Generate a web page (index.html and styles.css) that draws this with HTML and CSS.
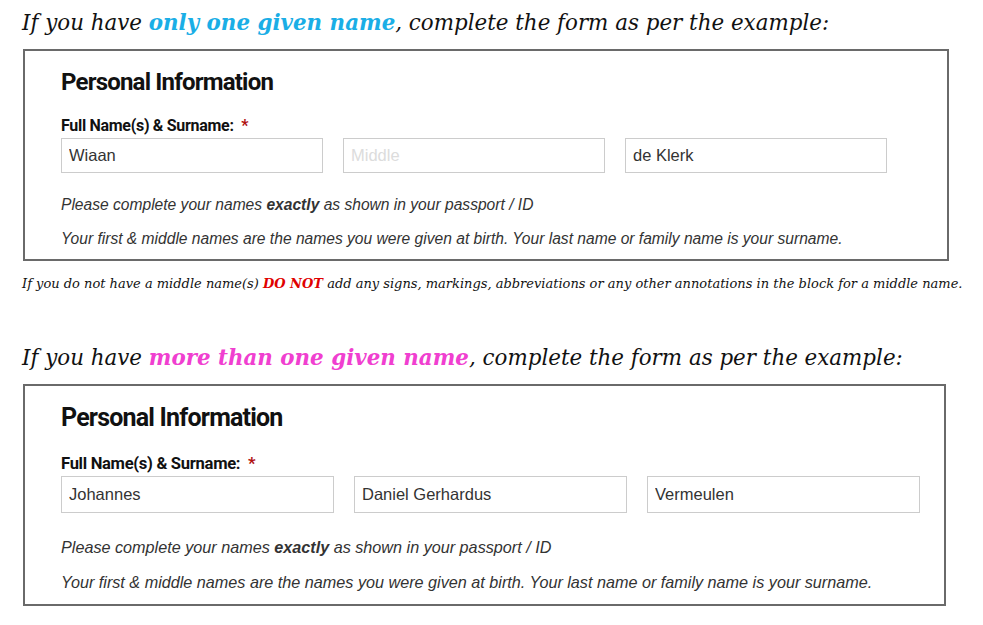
FILE: index.html
```html
<!DOCTYPE html>
<html lang="en">
<head>
<meta charset="utf-8">
<title>Name examples</title>
<link rel="stylesheet" href="styles.css">
</head>
<body>
<main class="page">
  <section class="example example--one">
    <h2 class="lead">If you have <strong class="hl hl--blue">only one given name</strong>, complete the form as per the example:</h2>
    <div class="card">
      <h3 class="card-title">Personal Information</h3>
      <div class="label">Full Name(s) &amp; Surname: <span class="req">*</span></div>
      <div class="fields">
        <input class="field" type="text" value="Wiaan" readonly>
        <input class="field" type="text" placeholder="Middle" readonly>
        <input class="field" type="text" value="de Klerk" readonly>
      </div>
      <p class="hint hint--first">Please complete your names <b>exactly</b> as shown in your passport / ID</p>
      <p class="hint">Your first &amp; middle names are the names you were given at birth. Your last name or family name is your surname.</p>
    </div>
    <p class="note">If you do not have a middle name(s) <strong class="warn">DO NOT</strong> add any signs, markings, abbreviations or any other annotations in the block for a middle name.</p>
  </section>

  <section class="example example--many">
    <h2 class="lead">If you have <strong class="hl hl--pink">more than one given name</strong>, complete the form as per the example:</h2>
    <div class="card card--lg">
      <h3 class="card-title">Personal Information</h3>
      <div class="label">Full Name(s) &amp; Surname: <span class="req">*</span></div>
      <div class="fields">
        <input class="field" type="text" value="Johannes" readonly>
        <input class="field" type="text" value="Daniel Gerhardus" readonly>
        <input class="field" type="text" value="Vermeulen" readonly>
      </div>
      <p class="hint hint--first">Please complete your names <b>exactly</b> as shown in your passport / ID</p>
      <p class="hint">Your first &amp; middle names are the names you were given at birth. Your last name or family name is your surname.</p>
    </div>
  </section>
</main>
</body>
</html>
```

FILE: styles.css
```css
html, body {
  margin: 0;
  padding: 0;
  background: #ffffff;
}

.page {
  padding: 8px 0 0 22px;
}

.lead {
  margin: 0;
  font-family: "DejaVu Serif", Georgia, serif;
  font-style: italic;
  font-weight: normal;
  font-size: 21.4px;
  line-height: 30px;
  color: #111;
  white-space: nowrap;
}

.hl {
  font-weight: bold;
}

.hl--blue { color: #1aaee6; }
.hl--pink { color: #f03fd0; }

.card {
  box-sizing: border-box;
  width: 926px;
  margin: 11px 0 0 1px;
  border: 2px solid #6a6a6a;
  padding: 17px 20px 11px 36px;
}

.card-title {
  margin: 0;
  font-family: Roboto, "Open Sans", sans-serif;
  font-weight: bold;
  font-size: 24px;
  line-height: 28px;
  letter-spacing: -0.8px;
  color: #111;
}

.label {
  margin-top: 20px;
  font-family: Roboto, "Open Sans", sans-serif;
  font-weight: bold;
  font-size: 16px;
  line-height: 20px;
  letter-spacing: -0.3px;
  color: #111;
}

.req {
  color: #b01010;
  margin-left: 4px;
}

.fields {
  display: flex;
  gap: 20px;
  margin-top: 2px;
}

.field {
  box-sizing: border-box;
  flex: 0 0 262px;
  width: 262px;
  height: 35px;
  margin: 0;
  padding: 0 7px;
  border: 1px solid #cccccc;
  border-radius: 0;
  font-family: "Liberation Sans", Arial, sans-serif;
  font-size: 16.5px;
  color: #333;
  background: #fff;
  outline: none;
}

.field::placeholder {
  color: #dcdcdc;
}

.hint {
  margin: 16px 0 0 0;
  font-family: "Liberation Sans", Arial, sans-serif;
  font-style: italic;
  font-size: 15.6px;
  line-height: 18px;
  color: #333;
  white-space: nowrap;
}

.hint--first {
  margin-top: 23px;
}

.note {
  margin: 15px 0 0 0;
  font-family: "DejaVu Serif", Georgia, serif;
  font-style: italic;
  font-size: 13px;
  line-height: 16px;
  color: #111;
  white-space: nowrap;
}

.warn {
  color: #e00000;
  font-weight: bold;
}

.example--many {
  margin-top: 51px;
}

.card--lg {
  width: 923px;
  margin-top: 11px;
  padding: 17px 20px 13px 36px;
}

.card--lg .card-title {
  font-size: 25px;
  line-height: 30px;
}

.card--lg .label {
  margin-top: 21px;
  font-size: 16.6px;
}

.card--lg .field {
  flex: 0 0 273px;
  width: 273px;
  height: 37px;
  font-size: 16.5px;
}

.card--lg .hint {
  font-size: 16.2px;
  margin-top: 17px;
}

.card--lg .hint--first {
  margin-top: 25px;
}
```
